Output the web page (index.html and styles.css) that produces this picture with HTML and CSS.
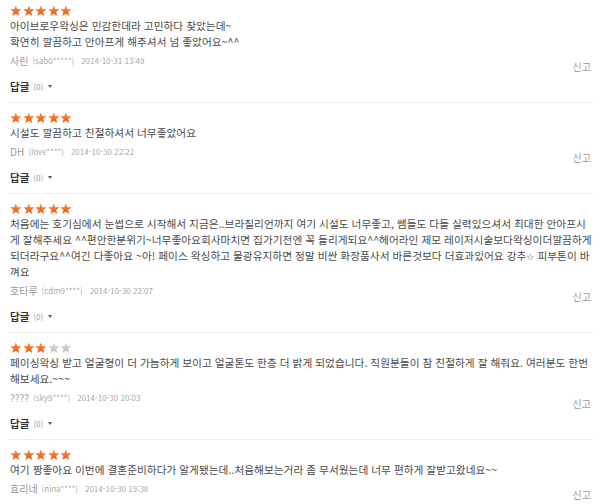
FILE: index.html
```html
<!DOCTYPE html>
<html lang="ko">
<head>
<meta charset="utf-8">
<title>후기</title>
<link rel="stylesheet" href="styles.css">
</head>
<body>
<svg width="0" height="0" class="defs">
  <defs>
    <linearGradient id="og" x1="0" y1="0" x2="0" y2="1">
      <stop offset="0" stop-color="#fb8a3c"/>
      <stop offset="1" stop-color="#ec5a12"/>
    </linearGradient>
    <linearGradient id="gg" x1="0" y1="0" x2="0" y2="1">
      <stop offset="0" stop-color="#d8d8d8"/>
      <stop offset="1" stop-color="#bdbdbd"/>
    </linearGradient>
    <symbol id="star" viewBox="0 0 24 23">
      <polygon points="12,0.5 15,8.2 23.5,8.6 16.8,13.9 19.2,22.3 12,17.5 4.8,22.3 7.2,13.9 0.5,8.6 9,8.2"/>
    </symbol>
  </defs>
</svg>
<ul class="reviews">
  <li class="review">
    <div class="stars">
      <svg class="star on"><use href="#star"/></svg><svg class="star on"><use href="#star"/></svg><svg class="star on"><use href="#star"/></svg><svg class="star on"><use href="#star"/></svg><svg class="star on"><use href="#star"/></svg>
    </div>
    <p class="text">아이브로우왁싱은 민감한데라 고민하다 찾았는데~<br>확연히 깔끔하고 안아프게 해주셔서 넘 좋았어요~^^</p>
    <div class="meta"><span class="name">사린</span><span class="uid">(sab0*****)</span><span class="date">2014-10-31 13:49</span><a class="report">신고</a></div>
    <div class="reply"><b>답글</b><span class="count">(0)</span><span class="caret"></span></div>
  </li>
  <li class="review">
    <div class="stars">
      <svg class="star on"><use href="#star"/></svg><svg class="star on"><use href="#star"/></svg><svg class="star on"><use href="#star"/></svg><svg class="star on"><use href="#star"/></svg><svg class="star on"><use href="#star"/></svg>
    </div>
    <p class="text">시설도 깔끔하고 친절하셔서 너무좋았어요</p>
    <div class="meta"><span class="name">DH</span><span class="uid">(love****)</span><span class="date">2014-10-30 22:22</span><a class="report">신고</a></div>
    <div class="reply"><b>답글</b><span class="count">(0)</span><span class="caret"></span></div>
  </li>
  <li class="review">
    <div class="stars">
      <svg class="star on"><use href="#star"/></svg><svg class="star on"><use href="#star"/></svg><svg class="star on"><use href="#star"/></svg><svg class="star on"><use href="#star"/></svg><svg class="star on"><use href="#star"/></svg>
    </div>
    <p class="text">처음에는 호기심에서 눈썹으로 시작해서 지금은..브라질리언까지 여기 시설도 너무좋고, 쌤들도 다들 실력있으셔서 최대한 안아프시게 잘해주세요 ^^편안한분위기~너무좋아요회사마치면 집가기전엔 꼭 들리게되요^^헤어라인 제모 레이저시술보다왁싱이더깔끔하게 되더라구요^^여긴 다좋아요 ~아! 페이스 왁싱하고 물광유지하면 정말 비싼 화장품사서 바른것보다 더효과있어요 강추<span class="sym">☆</span> 피부톤이 바껴요</p>
    <div class="meta"><span class="name">호타루</span><span class="uid">(cdm9****)</span><span class="date">2014-10-30 22:07</span><a class="report">신고</a></div>
    <div class="reply"><b>답글</b><span class="count">(0)</span><span class="caret"></span></div>
  </li>
  <li class="review">
    <div class="stars">
      <svg class="star on"><use href="#star"/></svg><svg class="star on"><use href="#star"/></svg><svg class="star on"><use href="#star"/></svg><svg class="star off"><use href="#star"/></svg><svg class="star off"><use href="#star"/></svg>
    </div>
    <p class="text">페이싱왁싱 받고 얼굴형이 더 가늠하게 보이고 얼굴톤도 한층 더 밝게 되었습니다. 직원분들이 참 친절하게 잘 해줘요. 여러분도 한번 해보세요.~~~</p>
    <div class="meta"><span class="name">????</span><span class="uid">(sky9****)</span><span class="date">2014-10-30 20:03</span><a class="report">신고</a></div>
    <div class="reply"><b>답글</b><span class="count">(0)</span><span class="caret"></span></div>
  </li>
  <li class="review">
    <div class="stars">
      <svg class="star on"><use href="#star"/></svg><svg class="star on"><use href="#star"/></svg><svg class="star on"><use href="#star"/></svg><svg class="star on"><use href="#star"/></svg><svg class="star on"><use href="#star"/></svg>
    </div>
    <p class="text">여기 짱좋아요 이번에 결혼준비하다가 알게됐는데..처음해보는거라 좀 무서웠는데 너무 편하게 잘받고왔네요~~</p>
    <div class="meta"><span class="name">효리네</span><span class="uid">(nina****)</span><span class="date">2014-10-30 19:38</span><a class="report">신고</a></div>
    <div class="reply"><b>답글</b><span class="count">(0)</span><span class="caret"></span></div>
  </li>
</ul>
</body>
</html>
```
FILE: styles.css
```css
html, body {
  margin: 0;
  padding: 0;
  background: #fff;
}
body {
  font-family: "Noto Sans CJK KR", "Noto Sans", sans-serif;
  color: #444;
  font-size: 10.7px;
  overflow: hidden;
}
.defs {
  position: absolute;
  width: 0;
  height: 0;
}
.reviews {
  list-style: none;
  margin: 0;
  padding: 0 7px 0 8px;
}
.review {
  border-bottom: 1px solid #ececec;
  padding: 9px 0 6px 2px;
}
.review:first-child {
  padding-top: 5px;
}
.stars {
  display: flex;
  gap: 1px;
  height: 11px;
  margin-bottom: 2px;
}
.star {
  width: 11.6px;
  height: 11.5px;
  display: block;
}
.star.on { fill: url(#og); }
.star.off { fill: url(#gg); }
.text {
  margin: 0;
  line-height: 16px;
  color: #4a4a4a;
}
.sym {
  font-family: "DejaVu Sans", sans-serif;
  font-size: 9px;
  line-height: 1;
}
.meta {
  display: flex;
  align-items: center;
  height: 20px;
  margin-top: 1px;
  line-height: 20px;
  color: #999;
}
.name {
  font-size: 10px;
  color: #999;
  margin-right: 4px;
}
.uid {
  font-size: 8px;
  color: #aaa;
  margin-right: 7px;
}
.date {
  font-size: 8px;
  color: #aaa;
}
.report {
  margin-left: auto;
  font-size: 10px;
  color: #9a9a9a;
  padding-top: 12px;
  margin-right: 2px;
}
.reply {
  display: flex;
  align-items: center;
  height: 20px;
  margin-top: 5px;
}
.reply b {
  font-size: 10.5px;
  font-weight: 700;
  color: #333;
  margin-right: 4px;
}
.count {
  font-size: 8px;
  color: #999;
  margin-right: 5px;
}
.caret {
  width: 0;
  height: 0;
  border-left: 2.5px solid transparent;
  border-right: 2.5px solid transparent;
  border-top: 3px solid #555;
  margin-top: 1px;
}
```
